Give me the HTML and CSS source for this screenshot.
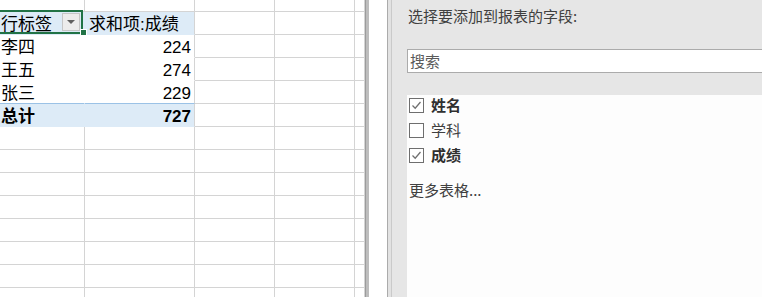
FILE: index.html
```html
<!DOCTYPE html>
<html lang="zh">
<head>
<meta charset="utf-8">
<title>数据透视表</title>
<link rel="stylesheet" href="styles.css">
</head>
<body>
<div class="app">
  <div class="sheet">
    <div class="c"></div><div class="c"></div><div class="c"></div><div class="c"></div><div class="c"></div>

    <div class="c ph pa sel"><span class="txt">行标签</span><span class="dd"><span class="tri"></span></span><span class="handle"></span></div>
    <div class="c ph pb"><span class="txt">求和项:成绩</span></div>
    <div class="c"></div><div class="c"></div><div class="c"></div>

    <div class="c pd pa"><span class="txt">李四</span></div>
    <div class="c pd pb num"><span class="txt">224</span></div>
    <div class="c"></div><div class="c"></div><div class="c"></div>

    <div class="c pd pa"><span class="txt">王五</span></div>
    <div class="c pd pb num"><span class="txt">274</span></div>
    <div class="c"></div><div class="c"></div><div class="c"></div>

    <div class="c pd pa last"><span class="txt">张三</span></div>
    <div class="c pd pb num last"><span class="txt">229</span></div>
    <div class="c"></div><div class="c"></div><div class="c"></div>

    <div class="c pt pa"><span class="txt">总计</span></div>
    <div class="c pt pb num"><span class="txt">727</span></div>
    <div class="c"></div><div class="c"></div><div class="c"></div>

    <div class="c"></div><div class="c"></div><div class="c"></div><div class="c"></div><div class="c"></div>
    <div class="c"></div><div class="c"></div><div class="c"></div><div class="c"></div><div class="c"></div>
    <div class="c"></div><div class="c"></div><div class="c"></div><div class="c"></div><div class="c"></div>
    <div class="c"></div><div class="c"></div><div class="c"></div><div class="c"></div><div class="c"></div>
    <div class="c"></div><div class="c"></div><div class="c"></div><div class="c"></div><div class="c"></div>
    <div class="c"></div><div class="c"></div><div class="c"></div><div class="c"></div><div class="c"></div>
    <div class="c"></div><div class="c"></div><div class="c"></div><div class="c"></div><div class="c"></div>
    <div class="c"></div><div class="c"></div><div class="c"></div><div class="c"></div><div class="c"></div>
  </div>
  <div class="split"></div>
  <div class="gap"></div>
  <div class="edge"></div>
  <div class="panel">
    <div class="title">选择要添加到报表的字段:</div>
    <div class="search">搜索</div>
    <div class="list">
      <div class="item">
        <span class="box"><svg width="13" height="13" viewBox="0 0 13 13"><path d="M2.5 6.5 L5.2 9.2 L10.5 3" fill="none" stroke="#707070" stroke-width="1.3"/></svg></span>
        <span class="lbl bold">姓名</span>
      </div>
      <div class="item">
        <span class="box"></span>
        <span class="lbl">学科</span>
      </div>
      <div class="item">
        <span class="box"><svg width="13" height="13" viewBox="0 0 13 13"><path d="M2.5 6.5 L5.2 9.2 L10.5 3" fill="none" stroke="#707070" stroke-width="1.3"/></svg></span>
        <span class="lbl bold">成绩</span>
      </div>
      <div class="more">更多表格...</div>
    </div>
  </div>
</div>
</body>
</html>
```

FILE: styles.css
```css
html, body {
  margin: 0;
  padding: 0;
  background: #ffffff;
}

body {
  width: 762px;
  height: 297px;
  overflow: hidden;
}

.app {
  display: flex;
  height: 297px;
  overflow: hidden;
}

/* ---------- spreadsheet ---------- */
.sheet {
  flex: none;
  width: 365px;
  display: grid;
  grid-template-columns: 85px 110px 80px 80px 10px;
  grid-template-rows: 12px;
  grid-auto-rows: 23px;
  align-content: start;
  overflow: hidden;
  background: #ffffff;
}

.c {
  box-sizing: border-box;
  border-right: 1px solid #d4d4d4;
  border-bottom: 1px solid #d4d4d4;
  font-family: "Liberation Sans", "Noto Sans CJK SC", sans-serif;
  font-size: 17px;
  line-height: 22px;
  color: #000000;
  white-space: nowrap;
  overflow: hidden;
  display: flex;
  align-items: flex-end;
  padding: 0 3px 0 1px;
}

.num {
  justify-content: flex-end;
}

.txt {
  display: block;
  margin-bottom: -2px;
}

/* pivot header */
.ph {
  background: #ddebf7;
  border-bottom-color: #ddebf7;
}
.ph.pa {
  border-right-color: #ddebf7;
}
.ph.pb {
  padding-left: 4px;
}

/* pivot data rows */
.pd {
  border-bottom-color: #ffffff;
}
.pd.pa {
  border-right-color: #ffffff;
}
.pd.last {
  border-bottom-color: #9bc2e6;
}

/* pivot total */
.pt {
  background: #ddebf7;
  border-bottom-color: #ddebf7;
  font-weight: bold;
}
.pt.pa {
  border-right-color: #ddebf7;
}

/* active cell selection */
.sel {
  position: relative;
  overflow: visible;
  z-index: 2;
}
.sel::after {
  content: "";
  position: absolute;
  top: -2px;
  left: -6px;
  right: 1px;
  bottom: 0;
  border: 2px solid #217346;
  pointer-events: none;
}
.handle {
  position: absolute;
  right: -3px;
  bottom: -2px;
  width: 5px;
  height: 5px;
  background: #217346;
  border: 1px solid #ffffff;
  z-index: 3;
}

/* filter dropdown button */
.dd {
  position: absolute;
  left: 62px;
  top: 1px;
  width: 18px;
  height: 18px;
  box-sizing: border-box;
  background: #ececec;
  border: 1px solid #c6c6c6;
  display: flex;
  align-items: center;
  justify-content: center;
}
.tri {
  width: 0;
  height: 0;
  border-left: 4px solid transparent;
  border-right: 4px solid transparent;
  border-top: 4px solid #606060;
}

/* ---------- splitter ---------- */
.split {
  flex: none;
  width: 4px;
  box-sizing: border-box;
  background: #bdbdbd;
  border-left: 1px solid #9c9c9c;
}
.gap {
  flex: none;
  width: 18px;
  background: #ffffff;
}
.edge {
  flex: none;
  width: 5px;
  box-sizing: border-box;
  background: #e2e2e2;
  border-left: 1px solid #ababab;
  border-right: 1px solid #cacaca;
}

/* ---------- field list panel ---------- */
.panel {
  flex: 1;
  min-width: 0;
  background: #e6e6e6;
  padding: 6px 0 0 15px;
  display: flex;
  flex-direction: column;
  overflow: hidden;
  font-family: "Noto Sans CJK SC", "Liberation Sans", sans-serif;
  font-size: 15px;
  color: #404040;
}

.title {
  line-height: 20px;
  padding-left: 1px;
}

.search {
  margin-top: 23px;
  margin-right: -6px;
  height: 24px;
  box-sizing: border-box;
  background: #ffffff;
  border: 1px solid #ababab;
  line-height: 22px;
  padding-left: 2px;
  color: #5a5a5a;
}

.list {
  margin-top: 22px;
  flex: 1;
  background: #fdfdfd;
  padding-top: 2px;
}

.item {
  display: flex;
  align-items: center;
  height: 16px;
  margin-left: 2px;
  margin-top: 9px;
}
.item:first-child {
  margin-top: 0;
}

.box {
  flex: none;
  width: 15px;
  height: 15px;
  box-sizing: border-box;
  border: 1px solid #6e6e6e;
  background: #ffffff;
  display: flex;
  align-items: center;
  justify-content: center;
}
.box svg {
  display: block;
}

.lbl {
  margin-left: 7px;
  line-height: 16px;
  color: #404040;
}
.bold {
  font-weight: bold;
  color: #303030;
}

.more {
  margin-top: 17px;
  margin-left: 2px;
  line-height: 20px;
}
```
